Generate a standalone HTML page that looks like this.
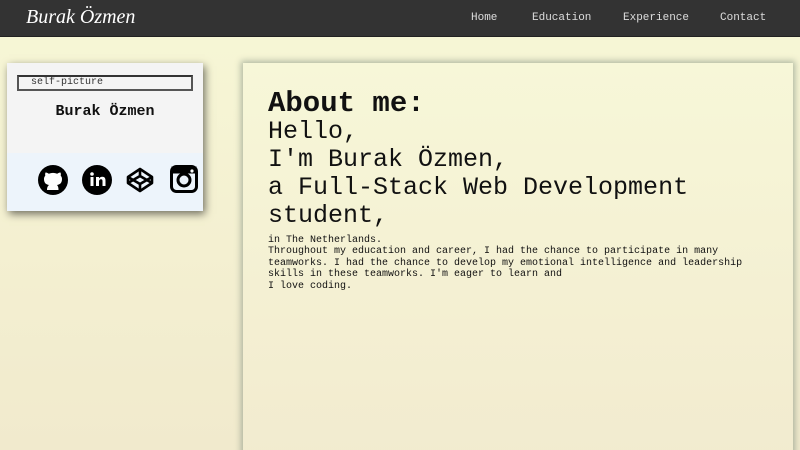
<!DOCTYPE html>
<html><head><meta charset="utf-8"><style>
*{margin:0;padding:0;box-sizing:border-box}
html,body{width:800px;height:450px;overflow:hidden}
body{background:linear-gradient(#f7f7d6,#f1eacd);font-family:"Liberation Mono",monospace;color:#111;position:relative}
nav{position:absolute;left:0;top:0;width:800px;height:37px;background:#333;border-bottom:1px solid #222}
.logo{position:absolute;left:26px;top:6px;font-family:"Liberation Serif",serif;font-style:italic;font-size:20px;color:#fff}
nav a{position:absolute;top:12px;font-size:11px;color:#ddd;text-decoration:none;}
.card{position:absolute;left:7px;top:63px;width:196px;height:148px;background:#f4f4f4;box-shadow:2px 3px 8px rgba(0,0,0,.55)}
.img{position:absolute;left:10px;top:12px;width:176px;height:16px;border:2px solid #555;border-top-color:#333;font-size:10px;line-height:12px;padding-left:12px;color:#333}
.name{position:absolute;left:0;width:196px;top:40px;text-align:center;font-weight:bold;font-size:15px}
.soc{position:absolute;left:0;top:90px;width:196px;height:58px;background:#edf4fb}
.soc svg{position:absolute;top:12px}
.main{position:absolute;left:243px;top:63px;width:550px;height:400px;background:linear-gradient(#f7f7d8,#f2ebcf);box-shadow:0 0 6px 2px rgba(90,110,100,.45)}
h1{position:absolute;left:25px;top:24px;font-size:29px;font-weight:bold;line-height:34px}
.big{position:absolute;left:25px;top:55px;font-size:25px;line-height:28px}
.small{position:absolute;left:25px;top:172px;font-size:10px;line-height:11.4px;width:478px}
</style></head><body>
<nav><div class="logo">Burak Özmen</div>
<a style="left:471px">Home</a><a style="left:532px">Education</a><a style="left:623px">Experience</a><a style="left:720px">Contact</a></nav>
<div class="card">
<div class="img">self-picture</div>
<div class="name">Burak Özmen</div>
<div class="soc">
<svg style="left:31px" width="30" height="30" viewBox="0 0 30 30"><circle cx="15" cy="15" r="15" fill="#000"/><path d="M9 25c0-3 1-4 2-5-3-.5-5-2-5-6 0-1.5.5-2.5 1.3-3.3-.2-.6-.3-2 .2-3.2 1.5 0 2.7.8 3.3 1.3a11 11 0 0 1 8.4 0c.6-.5 1.8-1.3 3.3-1.3.5 1.2.4 2.6.2 3.2.8.8 1.3 1.8 1.3 3.3 0 4-2 5.5-5 6 1 1 1.5 2.5 1.5 5z" fill="#fff"/></svg>
<svg style="left:75px" width="30" height="30" viewBox="0 0 30 30"><circle cx="15" cy="15" r="15" fill="#000"/><rect x="8.5" y="12" width="3" height="9" fill="#fff"/><circle cx="10" cy="9" r="1.8" fill="#fff"/><path d="M14 12h3v1.5c.6-1 1.8-1.8 3.3-1.8 2.5 0 3.2 1.700 3.2 4V21h-3v-4.8c0-1.2-.3-2-1.500-2s-2 .9-2 2.2V21h-3z" fill="#fff"/></svg>
<svg style="left:119px" width="28" height="30" viewBox="0 0 28 30"><g fill="none" stroke="#000" stroke-width="2.6" stroke-linejoin="round"><path d="M14 4 26 12v6L14 26 2 18v-6z"/><path d="M14 4v7M14 26v-7M2 12l12 7 12-7M2 18l12-7 12 7"/></g></svg>
<svg style="left:163px" width="28" height="28" viewBox="0 0 28 28"><rect x="1.5" y="1.5" width="25" height="25" rx="5" fill="none" stroke="#000" stroke-width="3"/><rect x="1.5" y="1.5" width="25" height="7" fill="#000"/><circle cx="14" cy="15" r="6" fill="none" stroke="#000" stroke-width="3"/><circle cx="22" cy="6" r="1.6" fill="#fff"/></svg>
</div></div>
<div class="main">
<h1>About me:</h1>
<div class="big">Hello,<br>I'm Burak Özmen,<br>a Full-Stack Web Development<br>student,</div>
<div class="small">in The Netherlands.<br>Throughout my education and career, I had the chance to participate in many<br>teamworks. I had the chance to develop my emotional intelligence and leadership<br>skills in these teamworks. I'm eager to learn and<br>I love coding.</div>
</div>
</body></html>
